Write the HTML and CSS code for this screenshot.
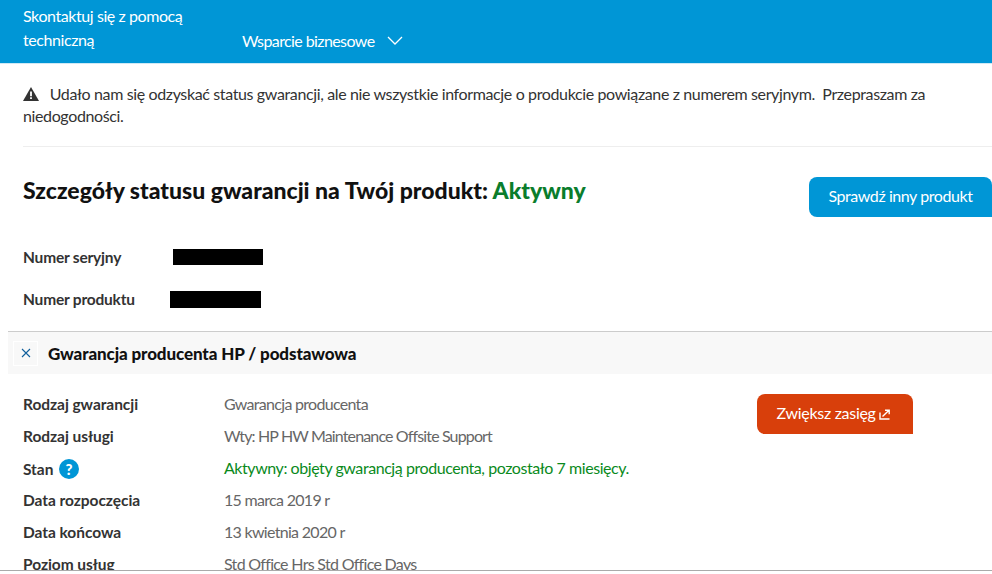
FILE: index.html
```html
<!DOCTYPE html>
<html lang="pl">
<head>
  <meta charset="UTF-8" />
  <title>Szczegóły statusu gwarancji</title>
  <link rel="stylesheet" href="styles.css">
</head>
<body>
  <div class="page">
    <header class="topbar">
      <div class="topbar-title">Skontaktuj się z pomocą techniczną</div>
      <div class="topbar-menu">
        <span>Wsparcie biznesowe</span>
        <svg class="chevron" width="16" height="9" viewBox="0 0 16 9"><path d="M1 1l7 7 7-7" fill="none" stroke="#fff" stroke-width="1.3"/></svg>
      </div>
    </header>

    <div class="content">
      <p class="notice">
        <svg class="warn" width="16" height="14" viewBox="0 0 16 14"><path d="M8 0l8 14H0z" fill="#333"/><path d="M7.1 4.6h1.8v4.6H7.1zM7.1 10.2h1.8V12H7.1z" fill="#fff"/></svg>
        Udało nam się odzyskać status gwarancji, ale nie wszystkie informacje o produkcie powiązane z numerem seryjnym. &nbsp;Przepraszam za niedogodności.
      </p>

      <div class="status-row">
        <h1>Szczegóły statusu gwarancji na Twój produkt: <span class="active">Aktywny</span></h1>
        <button type="button" class="btn-check">Sprawdź inny produkt</button>
      </div>

      <div class="id-row id-serial">
        <span class="id-label">Numer seryjny</span>
        <span class="redact"></span>
      </div>
      <div class="id-row id-product">
        <span class="id-label">Numer produktu</span>
        <span class="redact"></span>
      </div>
    </div>

    <section class="warranty">
      <div class="warranty-head">
        <span class="toggle">
          <svg width="10" height="10" viewBox="0 0 10 10"><path d="M1 1l8 8M9 1l-8 8" stroke="#0f5f9c" stroke-width="1.1" fill="none"/></svg>
        </span>
        <h2>Gwarancja producenta HP / podstawowa</h2>
      </div>
      <div class="warranty-body">
        <dl class="details">
          <dt>Rodzaj gwarancji</dt><dd>Gwarancja producenta</dd>
          <dt>Rodzaj usługi</dt><dd class="tight">Wty: HP HW Maintenance Offsite Support</dd>
          <dt>Stan <span class="help">?</span></dt><dd class="ok">Aktywny: objęty gwarancją producenta, pozostało 7 miesięcy.</dd>
          <dt>Data rozpoczęcia</dt><dd>15 marca 2019 r</dd>
          <dt>Data końcowa</dt><dd>13 kwietnia 2020 r</dd>
          <dt>Poziom usług</dt><dd>Std Office Hrs Std Office Days</dd>
        </dl>
        <button type="button" class="btn-extend">Zwiększ zasięg
          <svg class="ext-icon" width="12" height="11" viewBox="0 0 12 11"><path d="M1 3.5V10h9.5M3.5 7.5L10 1.2M6 1.2h4.2v4" fill="none" stroke="#fff" stroke-width="1.4"/></svg>
        </button>
      </div>
    </section>
  </div>
</body>
</html>
```

FILE: styles.css
```css
* {
  box-sizing: border-box;
}
html, body {
  margin: 0;
  height: 574px;
  overflow: hidden;
  background: #fff;
}
body {
  font-family: "Lato", Arial, sans-serif;
  font-size: 16px;
  letter-spacing: -0.42px;
  color: #333;
}
.page {
  height: 571px;
  overflow: hidden;
  border-bottom: 1px solid #aaa;
}
.topbar {
  display: flex;
  height: 64px;
  padding-left: 23px;
  background: #0096d6;
  border-bottom: 1px solid #cfe9f5;
  color: #fff;
}
.topbar-title {
  width: 219px;
  padding: 4px 40px 0 0;
  line-height: 24px;
}
.topbar-menu {
  display: flex;
  align-items: center;
  gap: 13px;
  height: 24px;
  margin-top: 28px;
  letter-spacing: -0.6px;
}
.content {
  padding: 0 0 0 23px;
}
.notice {
  margin: 0;
  padding: 19px 40px 19px 0;
  line-height: 22px;
  letter-spacing: -0.37px;
  border-bottom: 1px solid #eee;
}
.warn {
  margin-right: 7px;
  vertical-align: -1px;
}
.status-row {
  display: flex;
  justify-content: space-between;
  align-items: flex-start;
  padding-top: 30px;
}
h1 {
  margin: 0;
  font-size: 23px;
  line-height: 26px;
  font-weight: 900;
  letter-spacing: 0;
  color: #111;
}
.active {
  color: #0a7d2c;
}
.btn-check, .btn-extend {
  border: none;
  color: #fff;
  font: inherit;
  letter-spacing: inherit;
  height: 40px;
  padding: 0 0 4px;
}
.btn-check {
  width: 183px;
  background: #0096d6;
  border-radius: 8px 8px 0 8px;
}
.id-row {
  display: flex;
  align-items: center;
  height: 20px;
  font-weight: 700;
  font-size: 15.5px;
  letter-spacing: -0.2px;
}
.id-serial {
  margin-top: 30px;
}
.id-product {
  margin-top: 22px;
}
.id-label {
  width: 150px;
}
.id-product .id-label {
  width: 147px;
}
.redact {
  width: 90px;
  height: 16px;
  background: #000;
}
.id-product .redact {
  width: 91px;
  height: 17px;
}
.warranty {
  margin: 22px 0 0 8px;
}
.warranty-head {
  display: flex;
  align-items: center;
  gap: 10px;
  height: 43px;
  padding-left: 5px;
  background: #f8f8f8;
  border-top: 1px solid #ccc;
}
.toggle {
  display: flex;
  align-items: center;
  justify-content: center;
  width: 25px;
  height: 25px;
  border: 1px solid #fff;
}
h2 {
  margin: 0;
  font-size: 17px;
  font-weight: 900;
  letter-spacing: -0.11px;
  color: #111;
}
.warranty-body {
  display: flex;
  justify-content: space-between;
  padding: 21px 79px 0 15px;
}
.details {
  display: grid;
  grid-template-columns: 201px auto;
  grid-auto-rows: 32px;
  margin: 0;
}
.warranty-body .btn-extend {
  margin-top: -1px;
}
dt {
  font-size: 15.5px;
  font-weight: 700;
  letter-spacing: -0.05px;
}
dd {
  margin: 0;
  color: #666;
  line-height: 17px;
  letter-spacing: -0.7px;
}
dd.tight {
  letter-spacing: -0.86px;
}
dd.ok {
  color: #0a8a1c;
  letter-spacing: -0.44px;
}
.help {
  display: inline-block;
  width: 20px;
  height: 20px;
  margin-left: 2px;
  border-radius: 50%;
  background: #0096d6;
  color: #fff;
  text-align: center;
  line-height: 20px;
  font-size: 15px;
  font-weight: 900;
}
.btn-extend {
  width: 156px;
  background: #d83f0b;
  letter-spacing: -0.3px;
  padding-right: 2px;
  border-radius: 8px 8px 0 8px;
}
.ext-icon {
  vertical-align: -1px;
}
```
